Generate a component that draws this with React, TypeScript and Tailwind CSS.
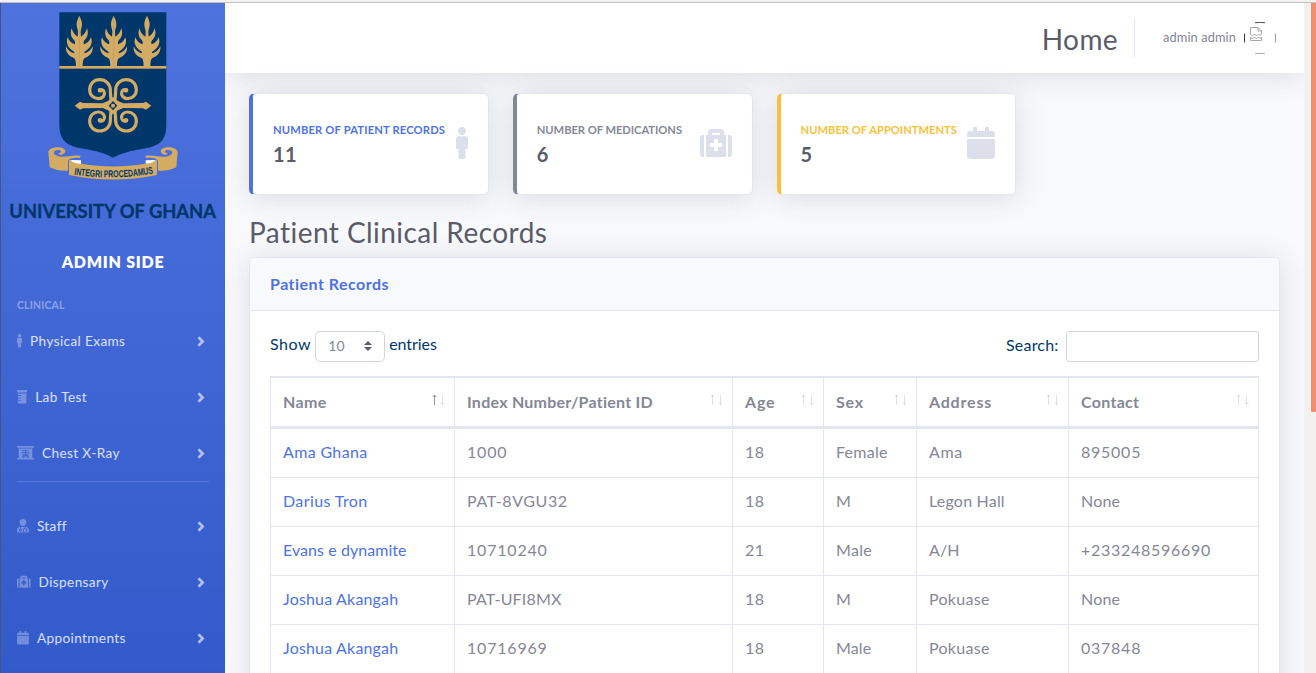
import React from "react";
import { FaMale, FaPrescriptionBottle, FaXRay, FaUserMd, FaMedkit, FaCalendar, FaAngleRight } from "react-icons/fa";

const GOLD = "#d4ab62";
const NAVY = "#00376b";

const halfPlant =
  "M-.5 47C4 55 9 64 8 75C7 85 4 89 4 96L5 110C13 106 19 98 23 85C28 99 25 112 16 120C12 124 12 129 14 133C23 130 31 123 35 112C41 128 34 142 23 150C16 154 14 156 15 160C25 158 35 151 40 139C42 155 33 167 21 172C12 175 10 182 10 201L-.5 201Z";

function Plant({ x }: { x: number }) {
  return (
    <g transform={`translate(${x} 0)`} fill={GOLD}>
      <path d={halfPlant} />
      <path d={halfPlant} transform="scale(-1 1)" />
    </g>
  );
}

const horn = "M5 4C6 22 8 30 8 46C8 64 22 77 40 77C58 77 70 64 70 47C70 31 58 20 44 20C31 20 24 30 26 39C28 46 34 49 40 46";

function Horn({ flip }: { flip?: string }) {
  return (
    <g transform={flip}>
      <path d={horn} />
      <circle cx="39" cy="45" r="2.5" fill={GOLD} />
    </g>
  );
}

function Crest() {
  return (
    <svg viewBox="3 9 672 666" className="block h-[222px] w-[224px] shrink-0 overflow-visible">
      <path d="M178 37H499V372C499 418 484 438 430 446C390 452 362 460 339 473C316 460 290 452 250 446C195 438 178 418 178 372Z" fill={NAVY} />
      <Plant x={238} />
      <Plant x={341} />
      <Plant x={441} />
      <rect x="178" y="198" width="321" height="8" fill={GOLD} />
      <g transform="translate(339 316)" fill="none" stroke={GOLD} strokeWidth="9.5" strokeLinecap="round">
        <Horn />
        <Horn flip="scale(-1 1)" />
        <Horn flip="scale(1 -1)" />
        <Horn flip="scale(-1 -1)" />
      </g>
      <path d="M224 317L240 305L249 309L308 310L324 303L339 291L354 303L370 310L429 309L438 305L454 317L438 329L429 325L370 324L354 331L339 343L324 331L308 324L249 325L240 329Z" fill={GOLD} />
      <path d="M339 303L352 317L339 331L326 317Z" fill={NAVY} />
      <circle cx="339" cy="317" r="6" fill={GOLD} />
      <g fill={GOLD}>
        <path d="M145 457C145 438 194 436 196 453C196 464 176 468 174 460C184 460 187 451 176 450C163 449 155 459 168 466C190 478 212 462 243 468L238 474C220 472 207 476 204 482V512C188 514 168 511 149 502Z" />
        <path d="M533 457C533 438 484 436 482 453C482 464 502 468 504 460C494 460 491 451 502 450C515 449 523 459 510 466C488 478 466 462 435 468L440 474C458 472 471 476 474 482V512C490 514 510 511 529 502Z" />
        <path d="M207 479L213 480C216 487 228 490 244 491C308 502 371 502 435 491C451 490 461 487 465 480L471 479V525C382 543 296 543 207 525Z" />
      </g>
      <path d="M213 480L243 481V492C228 491 216 488 213 480ZM465 480L437 481V491C450 491 461 488 465 480Z" fill="#fff" />
      <path id="motto" d="M222 524Q340 542 463 520" fill="none" />
      <text fill={NAVY} className="font-['Liberation_Sans'] text-[30px] font-bold">
        <textPath href="#motto" textLength="239" lengthAdjust="spacingAndGlyphs">INTEGRI PROCEDAMUS</textPath>
      </text>
      <text x="28" y="653" textLength="620" lengthAdjust="spacingAndGlyphs" fill={NAVY} stroke={NAVY} strokeWidth="1" className="font-[Lato] text-[57px] font-bold">
        UNIVERSITY OF GHANA
      </text>
    </svg>
  );
}

function NavItem({ icon, label }: { icon: React.ReactNode; label: string }) {
  return (
    <a className="flex h-14 shrink-0 items-center px-4 text-[13.6px] text-white/80">
      <span className="mr-2 text-white/30">{icon}</span>
      <span className="tracking-[0.38px]">{label}</span>
      <FaAngleRight className="mr-px ml-auto h-[15px] w-[14px] text-white/60" stroke="currentColor" strokeWidth="12" />
    </a>
  );
}

function Sidebar() {
  return (
    <aside className="flex w-[225px] shrink-0 flex-col border-l border-[#3c5a80] bg-linear-to-b from-[#4e73df] to-[#335aca]">
      <Crest />
      <div className="mt-[21px] flex h-[31px] items-center justify-center text-base font-extrabold tracking-[0.75px] text-white">ADMIN SIDE</div>
      <div className="mt-5 px-4 text-[10.4px] leading-4 font-bold tracking-[0.2px] text-white/40">CLINICAL</div>
      <NavItem icon={<FaMale className="h-[13.6px] w-[5.1px]" />} label="Physical Exams" />
      <NavItem icon={<FaPrescriptionBottle className="h-[13.6px] w-[10.2px]" />} label="Lab Test" />
      <NavItem icon={<FaXRay className="h-[13.6px] w-[17px]" />} label="Chest X-Ray" />
      <div className="mx-4 mb-4 h-px shrink-0 bg-white/15" />
      <NavItem icon={<FaUserMd className="h-[13.6px] w-[11.9px]" />} label="Staff" />
      <NavItem icon={<FaMedkit className="h-[13.6px] w-[13.6px]" />} label="Dispensary" />
      <NavItem icon={<FaCalendar className="h-[13.6px] w-[11.9px]" />} label="Appointments" />
    </aside>
  );
}

const softShadow = "shadow-[0_2.4px_28px_rgba(58,59,69,0.15)]";

function BrokenAvatar() {
  return (
    <svg viewBox="0 0 32 32" className="h-8 w-8" fill="none">
      <path d="M11 .8Q16 -.2 21 .8" stroke="#444" />
      <path d="M.7 11.5Q.2 16 .7 20.5" stroke="#333" />
      <path d="M11 31.2Q16 32.2 21 31.2" stroke="#aaa" />
      <path d="M31.3 11.5Q31.8 16 31.3 20.5" stroke="#999" />
      <path d="M6.5 12V5.5H14L17.5 9V12M14 5.5V9H17.5M6.5 12L8.5 14L10.5 12L12.5 14L14.5 12L16 13.5L17.5 12M6.5 15V18.5H17.5V15M6.5 15L8.5 17L10.5 15L12.5 17L14.5 15L16 16.5L17.5 15" stroke="#a8a8a8" />
    </svg>
  );
}

function StatCard({ label, value, bar, color, tracking, icon }: { label: string; value: string; bar: string; color: string; tracking: string; icon: React.ReactNode }) {
  return (
    <div className={`flex h-[102px] items-center rounded-[5.6px] border border-l-4 border-[#e3e6f0] bg-white px-5 ${bar} ${softShadow}`}>
      <div className="pb-px whitespace-nowrap">
        <div className={`mb-1 text-[11.2px] leading-[17px] font-bold ${color} ${tracking}`}>{label}</div>
        <div className="text-xl leading-6 font-bold tracking-[0.5px] text-[#5a5c69]">{value}</div>
      </div>
      <div className="ml-auto pb-[3px] text-[#dddfeb]">{icon}</div>
    </div>
  );
}

function SortArrows({ active }: { active?: boolean }) {
  return (
    <svg viewBox="0 0 14 12" className="block h-3 w-[14px]" fill="none" stroke="#858796">
      <path d="M2.5 11V1M.7 3.2L2.5 1L4.3 3.2" opacity={active ? 0.9 : 0.24} />
      <path d="M10.5 1V10.5M8.7 8.3L10.5 10.5L12.3 8.3" opacity="0.24" />
    </svg>
  );
}

const columns = [
  { name: "Name", text: "tracking-[0.4px]" },
  { name: "Index Number/Patient ID", text: "tracking-[0.25px]" },
  { name: "Age", text: "tracking-[0.8px]" },
  { name: "Sex", text: "tracking-[0.8px]" },
  { name: "Address", text: "tracking-[0.8px]" },
  { name: "Contact", text: "tracking-[0.3px]" },
];

type Cell = [text: string, tracking: string];

const rows: Cell[][] = [
  [["Ama Ghana", "tracking-[0.35px]"], ["1000", "tracking-[0.8px]"], ["18", "tracking-[0.5px]"], ["Female", "tracking-[0.25px]"], ["Ama", "tracking-[0.6px]"], ["895005", "tracking-[0.75px]"]],
  [["Darius Tron", "tracking-[0.4px]"], ["PAT-8VGU32", "tracking-[0.6px]"], ["18", "tracking-[0.5px]"], ["M", ""], ["Legon Hall", "tracking-[0.2px]"], ["None", "tracking-[0.2px]"]],
  [["Evans e dynamite", "tracking-[0.06px]"], ["10710240", "tracking-[0.8px]"], ["21", "tracking-[0.5px]"], ["Male", "tracking-[0.3px]"], ["A/H", "tracking-[0.1px]"], ["+233248596690", "tracking-[0.72px]"]],
  [["Joshua Akangah", "tracking-[0.18px]"], ["PAT-UFI8MX", "tracking-[0.18px]"], ["18", "tracking-[0.5px]"], ["M", ""], ["Pokuase", "tracking-[0.3px]"], ["None", "tracking-[0.2px]"]],
  [["Joshua Akangah", "tracking-[0.18px]"], ["10716969", "tracking-[0.8px]"], ["18", "tracking-[0.5px]"], ["Male", "tracking-[0.1px]"], ["Pokuase", "tracking-[0.3px]"], ["037848", "tracking-[0.75px]"]],
];

const rowGrid = "grid grid-cols-[184px_278px_91px_93px_152px_190px]";

function RecordsTable() {
  return (
    <div className="mt-[14px] w-[989px] border-l border-[#e3e6f0]">
      <div className={`${rowGrid} h-[53px] border-t-2 border-b-3 border-[#e3e6f0]`}>
        {columns.map((c, i) => (
          <div key={c.name} className="flex items-center border-r border-[#e3e6f0] pr-2 pl-3 font-bold">
            <span className={`pb-px ${c.text}`}>{c.name}</span>
            <span className="mb-1 ml-auto"><SortArrows active={i === 0} /></span>
          </div>
        ))}
      </div>
      {rows.map((r, n) => (
        <div key={n} className={`${rowGrid} h-[49px] border-b border-[#e3e6f0]`}>
          {r.map(([text, tracking], i) => (
            <div key={i} className={`flex items-center border-r border-[#e3e6f0] pb-[2px] pl-3 ${tracking} ${i === 0 ? "text-[#4e73df]" : ""}`}>{text}</div>
          ))}
        </div>
      ))}
    </div>
  );
}

export default function App() {
  return (
    <div className="flex h-[673px] w-[1316px] flex-col overflow-hidden font-[Lato,sans-serif] text-base text-[#858796]">
      <div className="h-[3px] shrink-0 border-b border-[#c4c2be] bg-[#f3f2f0]" />
      <div className="flex min-h-0 flex-1">
        <Sidebar />
        <main className="flex w-[1079px] shrink-0 flex-col overflow-hidden bg-[#f8f9fc]">
          <header className={`flex h-[70px] shrink-0 items-center justify-end bg-white pr-7 ${softShadow}`}>
            <h1 className="pt-[2px] text-[28px] leading-8 tracking-[0.45px] text-[#5a5c69]">Home</h1>
            <div className="mr-7 ml-4 h-[38px] w-px bg-[#e3e6f0]" />
            <span className="mr-2 text-[12.8px] tracking-[0.1px]">admin admin</span>
            <BrokenAvatar />
          </header>
          <div className="flex flex-col pl-6">
            <div className="mt-5 grid w-[767.3px] grid-cols-3 gap-6">
              <StatCard label="NUMBER OF PATIENT RECORDS" value="11" bar="border-l-[#4e73df]" color="text-[#4e73df]" tracking="tracking-[0.16px]" icon={<FaMale className="h-8 w-3" />} />
              <StatCard label="NUMBER OF MEDICATIONS" value="6" bar="border-l-[#858796]" color="text-[#858796]" tracking="tracking-[-0.04px]" icon={<FaMedkit className="h-8 w-8" />} />
              <StatCard label="NUMBER OF APPOINTMENTS" value="5" bar="border-l-[#f6c23e]" color="text-[#f6c23e]" tracking="tracking-[0px]" icon={<FaCalendar className="h-8 w-7" />} />
            </div>
            <h2 className="mt-5 mb-2 text-[28px] leading-[34px] tracking-[0.45px] text-[#5a5c69]">Patient Clinical Records</h2>
            <section className={`h-[600px] w-[1031px] rounded-[5.6px] border border-[#e3e6f0] bg-white ${softShadow}`}>
              <div className="flex h-[53px] items-center rounded-t-[5px] border-b border-[#e3e6f0] bg-[#f8f9fc] px-5 pb-px font-bold tracking-[0.47px] text-[#4e73df]">Patient Records</div>
              <div className="px-5 pt-5">
                <div className="flex h-[31px] items-center text-[#00376b]">
                  <span className="mr-1 pb-[5px] tracking-[0.55px]">Show</span>
                  <div className="flex h-[31px] w-[70px] items-center rounded-[5px] border border-[#d1d3e2] pr-3 pb-px pl-3 text-sm tracking-[0.3px] text-[#858796]">
                    10
                    <svg viewBox="0 0 8 10" className="ml-auto h-[10px] w-2"><path d="M0 4L4 0L8 4ZM0 6L4 10L8 6Z" fill="#5a5c69" /></svg>
                  </div>
                  <span className="ml-1 pb-[5px] tracking-[-0.05px]">entries</span>
                  <span className="mr-[7.5px] ml-auto pb-[3px] tracking-[0.2px]">Search:</span>
                  <input className="h-[31px] w-[193px] rounded-[3.2px] border border-[#d1d3e2] bg-white" />
                </div>
                <RecordsTable />
              </div>
            </section>
          </div>
        </main>
        <div className="flex flex-1 justify-end bg-[#f2f1ef]">
          <div className="h-[409px] w-[5px] rounded-b-[1px] bg-[#f28e6c]" />
        </div>
      </div>
    </div>
  );
}
